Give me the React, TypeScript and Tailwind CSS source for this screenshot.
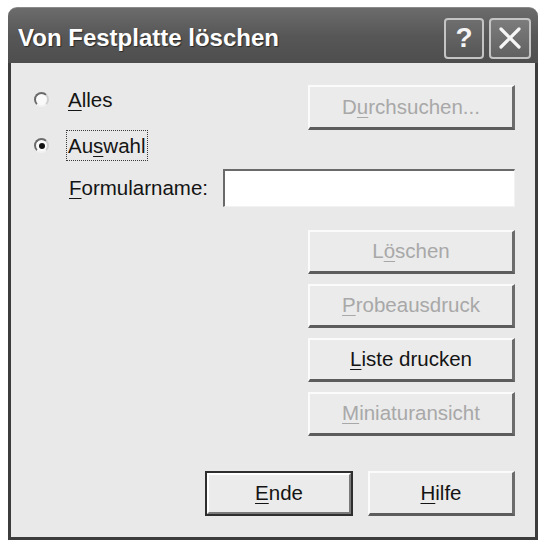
import React from 'react';

const font = { fontFamily: '"Liberation Sans", Arial, sans-serif' };

// underlined access key letter
function Key({ children }: { children: React.ReactNode }) {
  return <span className="underline decoration-1 underline-offset-[3px]">{children}</span>;
}

function Btn({
  children,
  disabled,
  isDefault,
  className = '',
}: {
  children: React.ReactNode;
  disabled?: boolean;
  isDefault?: boolean;
  className?: string;
}) {
  const frame = isDefault
    ? 'border-2 border-[#2e2e2e]'
    : 'border-t-2 border-l-2 border-b-[3px] border-r-[3px] border-t-[#fbfbfb] border-l-[#fbfbfb] border-b-[#5c5c5c] border-r-[#6c6c6c]';
  return (
    <div className={`flex items-center justify-center bg-[#ebebeb] ${frame} ${className}`}>
      <div
        className={`flex h-full w-full items-center justify-center ${
          isDefault ? 'border-t-2 border-l-2 border-b-2 border-r-2 border-t-white border-l-white border-b-[#7a7a7a] border-r-[#7a7a7a]' : ''
        }`}
      >
        <span className={`text-[20.5px] ${disabled ? 'text-[#a8a8a8]' : 'text-[#141414]'}`}>{children}</span>
      </div>
    </div>
  );
}

function Radio({ checked }: { checked?: boolean }) {
  return (
    <div className="flex h-[15px] w-[15px] items-center justify-center rounded-full border-[2.5px] border-t-[#6a6a6a] border-l-[#6a6a6a] border-b-[#f2f2f2] border-r-[#cfcfcf] bg-[#fafafa]">
      {checked && <div className="h-[6px] w-[6px] rounded-full bg-[#111]" />}
    </div>
  );
}

export default function App() {
  return (
    <div className="h-[542px] w-[543px] bg-white pl-[8px] pt-[7px]" style={font}>
      <div className="flex h-[533px] w-[530px] flex-col">
        {/* title bar */}
        <div className="flex h-[56px] items-center rounded-t-[9px] border-t border-[#8a8a8a] bg-gradient-to-b from-[#6c6c6c] via-[#575757] to-[#4e4e4e] pl-[10px] pr-[7px]">
          <span className="mt-[5px] flex-1 text-[24px] font-bold text-white [text-shadow:1px_1px_1px_#2a2a2a]">
            Von Festplatte löschen
          </span>
          <div className="mt-[5px] flex gap-[5px]">
            <div className="flex h-[41px] w-[40px] items-center justify-center rounded-[4px] border-2 border-[#c4c4c4] bg-gradient-to-b from-[#6e6e6e] to-[#565656]">
              <span className="text-[28px] font-bold leading-none text-[#f4f4f4]">?</span>
            </div>
            <div className="flex h-[41px] w-[42px] items-center justify-center rounded-[4px] border-2 border-[#c4c4c4] bg-gradient-to-b from-[#7c7c7c] to-[#626262]">
              <svg width="24" height="24" viewBox="0 0 24 24">
                <path d="M3 3L21 21M21 3L3 21" stroke="#f6f6f6" strokeWidth="3.2" strokeLinecap="round" />
              </svg>
            </div>
          </div>
        </div>

        {/* body */}
        <div className="flex flex-1 flex-col border-b-[3px] border-l-[3px] border-r-[3px] border-[#3c3c3c] bg-[#e9e9e9] pr-[20px]">
          <div className="mt-[22px] flex items-start">
            <div className="flex flex-1 flex-col pl-[23px] pt-[7px]">
              <div className="flex items-center">
                <Radio />
                <span className="ml-[19px] text-[20.5px] leading-[15px] text-[#141414]">
                  <Key>A</Key>lles
                </span>
              </div>
              <div className="mt-[23px] flex items-center">
                <Radio checked />
                <span className="ml-[17px] border border-dotted border-[#3a3a3a] px-[1px] py-[5px] text-[20.5px] leading-[19px] text-[#141414]">
                  Au<Key>s</Key>wahl
                </span>
              </div>
            </div>
            <Btn disabled className="h-[45px] w-[207px]">
              D<Key>u</Key>rchsuchen...
            </Btn>
          </div>

          <div className="mt-[8px] flex items-center pl-[58px]">
            <span className="w-[154px] text-[20.5px] text-[#141414]">
              <Key>F</Key>ormularname:
            </span>
            <div className="h-[38px] flex-1 border-t-2 border-l-2 border-b border-r border-t-[#6a6a6a] border-l-[#6a6a6a] border-b-[#f2f2f2] border-r-[#f2f2f2] bg-white" />
          </div>

          <div className="ml-auto mt-[23px] flex w-[207px] flex-col gap-[10px]">
            <Btn disabled className="h-[44px]">
              L<Key>ö</Key>schen
            </Btn>
            <Btn disabled className="h-[44px]">
              <Key>P</Key>robeausdruck
            </Btn>
            <Btn className="h-[44px]">
              <Key>L</Key>iste drucken
            </Btn>
            <Btn disabled className="h-[44px]">
              <Key>M</Key>iniaturansicht
            </Btn>
          </div>

          <div className="ml-auto mt-[35px] flex gap-[15px]">
            <Btn isDefault className="h-[45px] w-[148px]">
              <Key>E</Key>nde
            </Btn>
            <Btn className="h-[45px] w-[147px]">
              <Key>H</Key>ilfe
            </Btn>
          </div>
        </div>
      </div>
    </div>
  );
}
